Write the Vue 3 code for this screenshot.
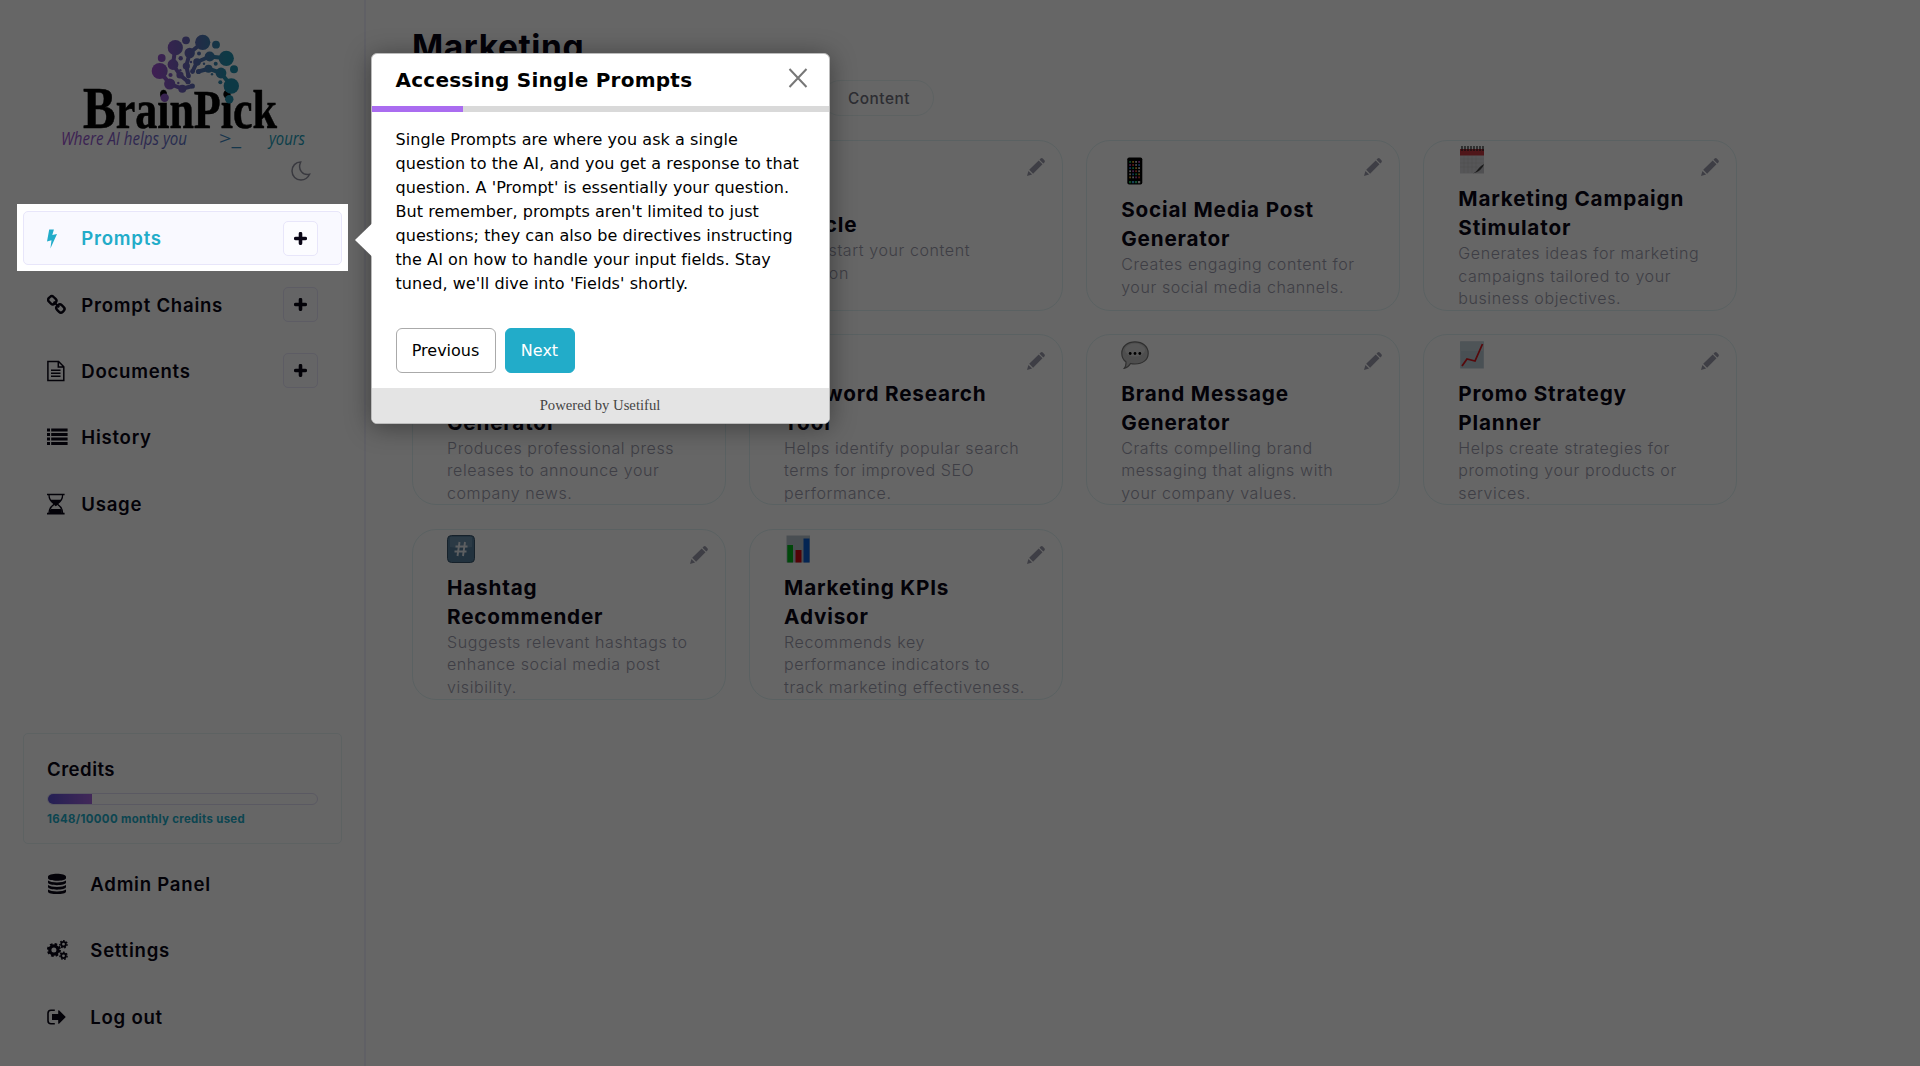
<template>
  <div class="app">
    <aside class="sidebar">
      <div class="sidebar-top">
        <svg class="logo" width="260" height="130" viewBox="54 26 260 130">
          <defs>
            <linearGradient id="brand" gradientUnits="userSpaceOnUse" x1="152" y1="0" x2="240" y2="0">
              <stop offset="0" stop-color="#a04fd0" />
              <stop offset="0.45" stop-color="#6068b4" />
              <stop offset="0.85" stop-color="#2290ac" />
            </linearGradient>
            <linearGradient id="tagline" gradientUnits="userSpaceOnUse" x1="60" y1="0" x2="306" y2="0">
              <stop offset="0" stop-color="#a04fd0" />
              <stop offset="0.5" stop-color="#5a6fc4" />
              <stop offset="0.85" stop-color="#1f9ab8" />
            </linearGradient>
          </defs>
          <text class="wordmark" x="83" y="128" textLength="194" lengthAdjust="spacingAndGlyphs"><tspan font-size="60">B</tspan>rainPick</text>
          <g fill="url(#brand)">
            <path v-for="(arm, i) in arms" :key="'arm' + i" :d="armPath(arm)" fill="none" stroke="url(#brand)" stroke-width="4" stroke-linejoin="round" />
            <template v-for="(arm, i) in arms" :key="'nodes' + i">
              <circle v-for="(n, j) in arm" :key="j" :cx="n[0]" :cy="n[1]" :r="n[2]" />
            </template>
            <circle v-for="(d, i) in dots" :key="'dot' + i" :cx="d[0]" :cy="d[1]" :r="d[2]" />
          </g>
          <g class="tagline" fill="url(#tagline)">
            <text x="61" y="145" textLength="126" lengthAdjust="spacingAndGlyphs">Where AI helps you</text>
            <text x="219" y="145" textLength="22" lengthAdjust="spacingAndGlyphs" class="upright">&gt;_</text>
            <text x="269" y="145" textLength="36" lengthAdjust="spacingAndGlyphs">yours</text>
          </g>
        </svg>
        <svg class="moon" width="20" height="20" viewBox="0 0 20 20">
          <path d="M9.7 1 C4.6 1 1 5 1 10 C1 15.1 5 19 9.9 19 C13.9 19 17 16.8 18.6 13.3 C12 14.8 6.2 8.8 9.7 1 Z" />
        </svg>

        <nav class="menu">
          <div v-for="item in menu" :key="item.label" class="menu-item" :class="{ active: item.active }">
            <svg class="menu-icon" width="22" height="22" viewBox="0 0 22 22" v-html="icons[item.icon]"></svg>
            <span class="menu-label">{{ item.label }}</span>
            <button v-if="item.add" class="add-btn">
              <svg width="13" height="13" viewBox="0 0 13 13">
                <path d="M6.5 1.7V11.3M1.7 6.5H11.3" />
              </svg>
            </button>
          </div>
        </nav>
      </div>

      <div class="sidebar-bottom">
        <div class="credits">
          <div class="credits-title">Credits</div>
          <div class="credits-bar">
            <div class="credits-fill" :style="{ width: creditsPercent + '%' }"></div>
          </div>
          <div class="credits-text">{{ used }}/{{ total }} monthly credits used</div>
        </div>
        <nav class="menu">
          <div v-for="item in footerMenu" :key="item.label" class="menu-item wide">
            <svg class="menu-icon" width="22" height="22" viewBox="0 0 22 22" v-html="icons[item.icon]"></svg>
            <span class="menu-label">{{ item.label }}</span>
          </div>
        </nav>
      </div>
    </aside>

    <main class="content">
      <h1>Marketing</h1>
      <div class="tabs">
        <button class="tab">Content</button>
      </div>
      <div class="cards">
        <div v-for="(card, i) in cards" :key="i" class="card">
          <svg v-if="card.icon" class="card-icon" width="28" height="28" viewBox="0 0 28 28" v-html="emoji[card.icon]"></svg>
          <div v-else class="card-icon"></div>
          <div class="card-title">
            <div v-for="line in card.title" :key="line">{{ line }}</div>
          </div>
          <div class="card-desc">
            <div v-for="line in card.desc" :key="line">{{ line }}</div>
          </div>
          <svg class="pencil" width="18" height="18" viewBox="0 0 18 18">
            <path d="M0 18 L1.4 12.9 L5.1 16.6 Z M2.2 11.8 L11.7 2.5 L15.5 6.3 L6.1 15.8 Z M12.5 1.7 L13.6 0.6 Q14.7 -0.4 15.8 0.6 L17.4 2.2 Q18.4 3.3 17.4 4.4 L16.3 5.5 Z" />
          </svg>
        </div>
      </div>
    </main>

    <div class="spotlight"></div>

    <div class="tour">
      <svg class="tour-arrow" width="18" height="34" viewBox="0 0 18 34">
        <path d="M18 0.5 L1 17 L18 33.5 Z" />
      </svg>
      <div class="tour-header">
        <span class="tour-title">Accessing Single Prompts</span>
        <svg class="tour-close" width="20" height="20" viewBox="0 0 20 20">
          <path d="M1.5 1L18.5 19M18.5 1L1.5 19" />
        </svg>
      </div>
      <div class="tour-progress"><div class="tour-progress-fill" :style="{ width: tourProgress + '%' }"></div></div>
      <div class="tour-body">
        <div v-for="line in tourText" :key="line">{{ line }}</div>
      </div>
      <div class="tour-actions">
        <button class="tour-btn">Previous</button>
        <button class="tour-btn primary">Next</button>
      </div>
      <div class="tour-footer">Powered by Usetiful</div>
    </div>
  </div>
</template>

<script setup>
import { computed, ref } from 'vue'

const used = ref(1648)
const total = ref(10000)
const creditsPercent = computed(() => (used.value / total.value) * 100)
const tourProgress = ref(20)

const menu = [
  { label: 'Prompts', icon: 'bolt', add: true, active: true },
  { label: 'Prompt Chains', icon: 'chain', add: true },
  { label: 'Documents', icon: 'file', add: true },
  { label: 'History', icon: 'list' },
  { label: 'Usage', icon: 'hourglass' }
]

const footerMenu = [
  { label: 'Admin Panel', icon: 'database' },
  { label: 'Settings', icon: 'gears' },
  { label: 'Log out', icon: 'logout' }
]

const cards = [
  { title: [], desc: [] },
  { title: ['Article'], desc: ['Jumpstart your content', 'creation'] },
  { icon: 'phone', title: ['Social Media Post', 'Generator'], desc: ['Creates engaging content for', 'your social media channels.'] },
  { icon: 'calendar', title: ['Marketing Campaign', 'Stimulator'], desc: ['Generates ideas for marketing', 'campaigns tailored to your', 'business objectives.'] },
  { title: ['Press Release', 'Generator'], desc: ['Produces professional press', 'releases to announce your', 'company news.'] },
  { title: ['Keyword Research', 'Tool'], desc: ['Helps identify popular search', 'terms for improved SEO', 'performance.'] },
  { icon: 'bubble', title: ['Brand Message', 'Generator'], desc: ['Crafts compelling brand', 'messaging that aligns with', 'your company values.'] },
  { icon: 'chart', title: ['Promo Strategy', 'Planner'], desc: ['Helps create strategies for', 'promoting your products or', 'services.'] },
  { icon: 'hash', title: ['Hashtag', 'Recommender'], desc: ['Suggests relevant hashtags to', 'enhance social media post', 'visibility.'] },
  { icon: 'bars', title: ['Marketing KPIs', 'Advisor'], desc: ['Recommends key', 'performance indicators to', 'track marketing effectiveness.'] }
]

const tourText = [
  'Single Prompts are where you ask a single',
  'question to the AI, and you get a response to that',
  "question. A 'Prompt' is essentially your question.",
  "But remember, prompts aren't limited to just",
  'questions; they can also be directives instructing',
  'the AI on how to handle your input fields. Stay',
  "tuned, we'll dive into 'Fields' shortly."
]

// Logo: each arm is a chain of [x, y, radius] nodes
const arms = [
  [[159.7, 71, 8], [169.7, 84, 5.6], [182.3, 88.7, 4], [192.3, 86, 2.6]],
  [[175.3, 47.7, 7.6], [173, 64.5, 5.4], [180, 75, 3.6], [188, 81.7, 2.6]],
  [[202.7, 42.3, 7.6], [189.7, 53, 5.2], [186.3, 66, 3.6], [188.5, 76, 2.4]],
  [[226.3, 58.3, 7.6], [209.7, 56.5, 5], [197, 62, 3.8], [192.5, 71.5, 2.4]],
  [[231.3, 86, 7.7], [221, 73, 5.4], [208.5, 68.7, 4], [198.5, 71.5, 2.6]]
]

const dots = [
  [161.7, 58, 3.9], [186, 40.3, 3.9], [216, 44.7, 3.9], [234, 69.3, 4],
  [229.3, 99.3, 4.2], [164.7, 97.7, 4.2], [180.7, 58.3, 2.2], [199, 53.5, 2],
  [170.5, 75, 2.1], [215.7, 63.7, 2], [220.3, 82.3, 2], [204, 63.7, 1.2],
  [191, 62, 1.2], [180.3, 70.3, 1.2], [212, 74.3, 1.2], [178.3, 83, 1.2]
]

function armPath(arm) {
  return 'M' + arm.map(n => `${n[0]} ${n[1]}`).join(' L')
}

const icons = {
  bolt: '<path fill="currentColor" d="M2.2 2.5H6.9L5.3 8.1L10 7.1L3.4 21.5L4.5 13.3L0 14.5Z"/>',
  chain: '<g fill="none" stroke="currentColor" stroke-width="2.4"><rect x="1.3" y="3" width="8" height="6.6" rx="2.6" transform="rotate(45 5.3 6.3)"/><rect x="9.4" y="11.2" width="8" height="6.6" rx="2.6" transform="rotate(45 13.4 14.5)"/><path d="M6.6 7.6L12.2 13.2" stroke-width="2"/></g>',
  file: '<g fill="none" stroke="currentColor" stroke-width="1.5"><path d="M0.9 1.5H11.6L16.8 6.7V20.5H0.9Z M11.3 1.5V7H16.8"/><path d="M4 10.2H13.5M4 13.3H13.5M4 16.3H13.5"/></g>',
  list: '<path fill="currentColor" d="M0 2.6H3V5.4H0Z M4.2 2.6H20.6V5.4H4.2Z M0 7.1H3V9.9H0Z M4.2 7.1H20.6V9.9H4.2Z M0 11.6H3V14.4H0Z M4.2 11.6H20.6V14.4H4.2Z M0 16.1H3V18.9H0Z M4.2 16.1H20.6V18.9H4.2Z"/>',
  hourglass: '<path fill="currentColor" d="M0 0.7H17.6V2.2H0Z M0 19.8H17.6V21.4H0Z M3 6.7H14.6L10.5 11L9.8 12.6L14.8 17V20H2.8V17L7.8 12.6L7.1 11Z"/><path fill="none" stroke="currentColor" stroke-width="1.3" d="M2 2C2 8 5.5 9.5 7.5 11C5.5 12.5 2 14 2 20M15.6 2C15.6 8 12.1 9.5 10.1 11C12.1 12.5 15.6 14 15.6 20"/><path fill="#fff" d="M4 16Q5.5 13.3 7.8 12.6L8.8 13.2L9.8 12.6Q12.1 13.3 13.6 16Z"/>',
  database: '<path fill="currentColor" d="M1 3.8C1 -0.3 19 -0.3 19 3.8V5C19 8.7 1 8.7 1 5Z M1 7.6C4 10.2 16 10.2 19 7.6V9.6C19 13.1 1 13.1 1 9.6Z M1 12.1C4 14.7 16 14.7 19 12.1V14.1C19 17.6 1 17.6 1 14.1Z M1 16.6C4 19.2 16 19.2 19 16.6V18.4C19 22 1 22 1 18.4Z"/>',
  gears: '<g fill="none" stroke="currentColor"><circle cx="6.9" cy="11" r="4.1" stroke-width="3.2"/><circle cx="6.9" cy="11" r="6" stroke-width="2" stroke-dasharray="2.6 2.112"/><circle cx="16.5" cy="5.2" r="2.3" stroke-width="1.8"/><circle cx="16.5" cy="5.2" r="3.6" stroke-width="1.4" stroke-dasharray="1.6 1.627"/><circle cx="16.5" cy="16.8" r="2.3" stroke-width="1.8"/><circle cx="16.5" cy="16.8" r="3.6" stroke-width="1.4" stroke-dasharray="1.6 1.627"/></g>',
  logout: '<path fill="none" stroke="currentColor" stroke-width="1.6" d="M7.8 4.3H4Q1 4.3 1 7.3V14.7Q1 17.7 4 17.7H7.8"/><path fill="currentColor" d="M5 8H11.2V4.6Q11.5 3.9 12.3 4.4L18.3 10.4Q18.9 11 18.3 11.6L12.3 17.6Q11.5 18.1 11.2 17.4V14H5Z"/>'
}

const emoji = {
  phone: '<rect x="6.3" y="0.5" width="15" height="27" rx="1.8" fill="#000"/>' + phoneApps(),
  calendar: '<path d="M2 4H26V19L16 27.5H2Z" fill="#d8d8dc"/><path d="M16 27.5C20 25 21 21 26 19V27.5Z" fill="#c9c9cc"/><path d="M15 27.5C20 25 20 21 26 18C25 22 21 26 15 27.5Z" fill="#444"/><path d="M2 3H26V9.5H2Z" fill="#c5393f"/><path d="M4 0V5M7 0V5M10 0V5M13 0V5M16 0V5M19 0V5M22 0V5M25 0V5" stroke="#222" stroke-width="1.2"/><path d="M2 13H26M2 17H26M2 21H20M6 10V27M10 10V27M14 10V27M18 10V24" stroke="#c4c4c8" stroke-width=".6"/>',
  bubble: '<path d="M14 .8C21.5 .8 27.2 5.5 27.2 12.2C27.2 19 21.5 23 14 23C12.3 23 10.8 22.9 9.5 22.5C8 25 5.8 26.8 3.2 27.4C4.8 25.5 5.2 23 4.9 20.8C2.2 18.8 .8 16 .8 12.2C.8 5.5 6.5 .8 14 .8Z" fill="#c4c4c4" stroke="#777" stroke-width="1.2"/><ellipse cx="14" cy="9" rx="10" ry="6.5" fill="#dadada"/><circle cx="9.2" cy="12.5" r="1.4"/><circle cx="14" cy="12.5" r="1.4"/><circle cx="18.8" cy="12.5" r="1.4"/>',
  chart: '<path d="M2.2 .5H25.8V27.5H2.2Z" fill="#b7c8d2"/><path d="M2.2 .5H25.8V10H2.2Z" fill="#c3d1d9"/><path d="M4 25L9 18L17 20L24.5 3" fill="none" stroke="#d81920" stroke-width="1.8"/>',
  hash: '<rect x=".5" y=".5" width="27" height="27" rx="4" fill="#557d9c" stroke="#38536a"/><path d="M3 2H25V12Q14 14 3 12Z" fill="#6c91ad"/><path d="M12.5 7L10.5 21M18 7L16 21M8.5 11.5H20.5M7.5 16.5H19.5" stroke="#e8edf2" stroke-width="1.9"/>',
  bars: '<path d="M2.5 .5H26V27.5H2.5Z" fill="#b7c3cc"/><path d="M3.3 10H9V27.5H3.3Z" fill="#00b51a"/><path d="M11.5 15H17.5V27.5H11.5Z" fill="#d00810"/><path d="M19.5 3.5H25.5V27.5H19.5Z" fill="#0a5cd0"/>'
}

function phoneApps() {
  const colors = ['#29b46a', '#bbb', '#b04ab0', '#d7a52b', '#2f7fd0', '#d8443a', '#ccc']
  let out = ''
  for (let y = 0; y < 6; y++) {
    for (let x = 0; x < 4; x++) {
      out += `<rect x="${8.2 + x * 3}" y="${4 + y * 3.1}" width="1.8" height="1.8" fill="${colors[(x * 3 + y * 2) % 7]}"/>`
    }
  }
  for (let x = 0; x < 4; x++) {
    out += `<rect x="${8 + x * 3}" y="24" width="2.2" height="2.2" fill="${['#22b455', '#3a9ad8', '#2fc07a', '#ccc'][x]}"/>`
  }
  return out
}
</script>

<style>
body {
  margin: 0;
  background: #fff;
}
</style>

<style scoped>
.app {
  position: relative;
  display: flex;
  width: 1920px;
  height: 1066px;
  overflow: hidden;
  background: #fff;
  color: #090515;
  font-family: Inter, "Open Sans", sans-serif;
}

.app * {
  box-sizing: border-box;
}

button {
  margin: 0;
  font-family: inherit;
}

.sidebar {
  display: flex;
  flex-direction: column;
  justify-content: space-between;
  flex: none;
  width: 366px;
  height: 1066px;
  padding: 26px 22px 22px 23px;
  border-right: 2px solid #f1effd;
}

.sidebar-top {
  display: flex;
  flex-direction: column;
}

.logo {
  margin-left: 31px;
  overflow: visible;
}

.wordmark {
  font-family: "Liberation Serif", serif;
  font-size: 54px;
  font-weight: 700;
  fill: #000;
  stroke: #000;
  stroke-width: 0.6;
}

.tagline {
  font-family: "Open Sans", sans-serif;
  font-size: 19px;
  font-style: italic;
}

.upright {
  font-style: normal;
}

.moon {
  align-self: flex-end;
  margin: 5px 31px 30px 0;
  fill: none;
  stroke: #8f8f9e;
  stroke-width: 1.5;
}

.menu {
  display: flex;
  flex-direction: column;
  gap: 12px;
}

.menu-item {
  display: flex;
  align-items: center;
  height: 54.4px;
  padding: 0 23px;
  border: 1px solid transparent;
  border-radius: 5px;
}

.menu-item.active {
  background: #f9f9ff;
  border-color: #e8e6fa;
  color: #22acc9;
}

.menu-icon {
  flex: none;
  width: 22px;
  margin-right: 12.3px;
}

.menu-item.wide .menu-icon {
  margin-right: 21.3px;
}

.menu-label {
  flex: 1;
  font-size: 18.6px;
  font-weight: 600;
  letter-spacing: 0.04em;
}

.add-btn {
  display: flex;
  align-items: center;
  justify-content: center;
  width: 35px;
  height: 35px;
  padding: 0;
  border: 1px solid #e8e6fa;
  border-radius: 5px;
  background: #fcfcff;
}

.add-btn path {
  stroke: #090515;
  stroke-width: 3.6;
  stroke-linecap: round;
}

.sidebar-bottom {
  display: flex;
  flex-direction: column;
  gap: 12.6px;
}

.credits {
  height: 111.6px;
  padding: 23px 23px 0;
  border: 1px solid #e9f5f6;
  border-radius: 5px;
}

.credits-title {
  font-size: 18.6px;
  font-weight: 600;
  line-height: 24px;
  letter-spacing: 0.025em;
}

.credits-bar {
  height: 12px;
  margin-top: 12.4px;
  border: 1px solid #e2def5;
  border-radius: 6px;
  overflow: hidden;
}

.credits-fill {
  height: 100%;
  background: linear-gradient(90deg, #5a4fd0, #a565dd);
}

.credits-text {
  margin-top: 5px;
  color: #22acc9;
  font-size: 11.4px;
  font-weight: 700;
  line-height: 18px;
  letter-spacing: 0.03em;
}

.content {
  flex: none;
  width: 1372px;
  padding: 26px 0 0 46px;
}

h1 {
  margin: 0;
  font-size: 33.5px;
  font-weight: 700;
  line-height: 42px;
  letter-spacing: 0.018em;
}

.tabs {
  display: flex;
  padding: 12px 0 24px 410px;
}

.tab {
  width: 112px;
  height: 36px;
  padding: 0 4px 0 6px;
  border: 1px solid #e9f5f6;
  border-radius: 18px;
  background: none;
  color: #70707e;
  font-size: 15.4px;
  font-weight: 500;
  letter-spacing: 0.035em;
}

.cards {
  display: grid;
  grid-template-columns: repeat(4, 313.8px);
  grid-auto-rows: 171px;
  gap: 23.4px 23.3px;
}

.card {
  position: relative;
  display: flex;
  flex-direction: column;
  justify-content: center;
  padding-left: 34px;
  border: 1px solid #e2f3f5;
  border-radius: 24px;
  white-space: nowrap;
}

.card-icon {
  flex: none;
  height: 28px;
  margin: 5px 0 10px;
}

.card-title {
  font-size: 20.7px;
  font-weight: 700;
  line-height: 29px;
  letter-spacing: 0.04em;
}

.card-desc {
  color: #9c9cad;
  font-size: 16px;
  font-weight: 300;
  line-height: 22.6px;
  letter-spacing: 0.037em;
}

.pencil {
  position: absolute;
  top: 16.5px;
  right: 17px;
  fill: #9c9cac;
}

/* Dims everything but the highlighted menu entry */
.spotlight {
  position: absolute;
  left: 17px;
  top: 204px;
  width: 331px;
  height: 67px;
  box-shadow: 0 0 0 2000px rgba(0, 0, 0, 0.6);
}

.tour {
  position: absolute;
  left: 370.5px;
  top: 52.5px;
  display: flex;
  flex-direction: column;
  width: 459px;
  height: 371.5px;
  border: 1px solid #bbb;
  border-radius: 6px;
  background: #fff;
  box-shadow: 0 3px 26px rgba(0, 0, 0, 0.4);
  color: #000;
  font-family: "DejaVu Sans", sans-serif;
  white-space: nowrap;
}

.tour-arrow {
  position: absolute;
  left: -17.5px;
  top: 169px;
  fill: #fff;
}

.tour-header {
  display: flex;
  align-items: center;
  justify-content: space-between;
  height: 52.5px;
  padding: 0 20.5px 0 24px;
}

.tour-title {
  font-size: 20px;
  font-weight: 700;
  letter-spacing: 0.012em;
}

.tour-close {
  margin-bottom: 3px;
  stroke: #777;
  stroke-width: 2;
}

.tour-progress {
  height: 6px;
  background: #d9d9d9;
}

.tour-progress-fill {
  height: 100%;
  background: #aa6cf0;
}

.tour-body {
  padding: 16px 24px 0;
  font-size: 16px;
  line-height: 24px;
  letter-spacing: 0.07px;
}

.tour-actions {
  display: flex;
  gap: 9px;
  padding: 32px 24px 0;
}

.tour-btn {
  width: 100px;
  height: 45px;
  padding: 0;
  border: 1px solid #aaa;
  border-radius: 6px;
  background: #fff;
  color: #000;
  font-size: 16px;
}

.tour-btn.primary {
  width: 70px;
  border-color: #22acc9;
  background: #22acc9;
  color: #fff;
}

.tour-footer {
  display: flex;
  align-items: center;
  justify-content: center;
  height: 35px;
  margin-top: auto;
  border-radius: 0 0 5px 5px;
  background: #e4e4e4;
  color: #444;
  font-family: "Liberation Serif", serif;
  font-size: 14.7px;
}
</style>
